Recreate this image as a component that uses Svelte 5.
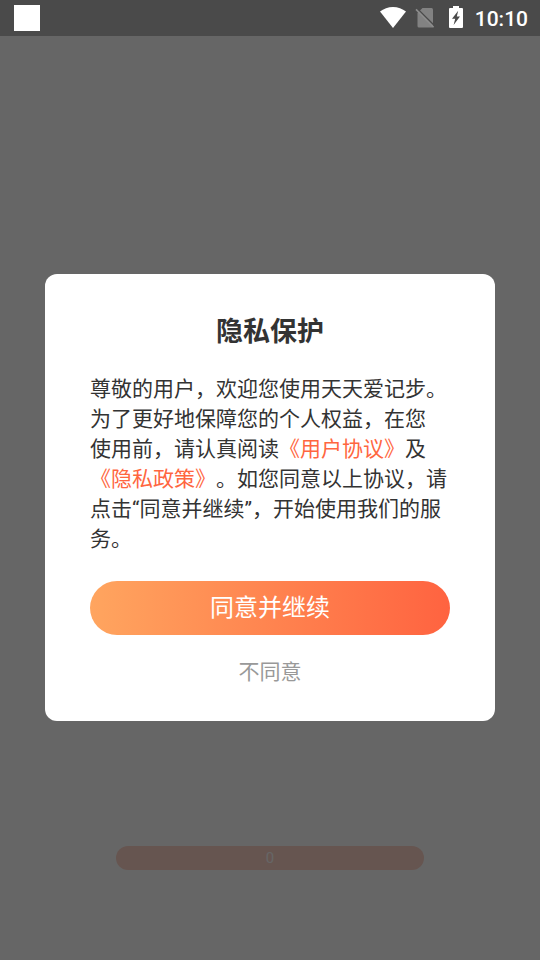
<svelte:head>
	<title>天天爱记步</title>
</svelte:head>
<script>
	let open = true,
	progress = 0,
	time = '10:10';

	function close() {
		open = false;
	}
</script>

<div class="screen">
	<header>
		<span class="app"></span>
		<svg class="wifi" viewBox="0 0 26 21" aria-hidden="true">
			<path d="M0 4.6C3.6 1.7 8.1 0 13 0s9.400 1.700 13 4.600L13 21z" fill="#fff" />
		</svg>
		<svg class="sim" viewBox="0 0 20 21" aria-hidden="true">
			<path d="M7.500 1h9q1.500 0 1.500 1.500v17q0 1-1 1H4q-1.500 0-1.500-1.500V6z" fill="#828282" />
			<path d="M2.200 1.400L19.600 18.800" stroke="#4a4a4a" stroke-width="1.400" />
			<path d="M1 2.400L18.600 20.200" stroke="#8c8c8c" stroke-width="1.600" />
		</svg>
		<svg class="battery" viewBox="0 0 14 22" aria-hidden="true">
			<path d="M4 0h6v2h3q1 0 1 1v18q0 1-1 1H1q-1 0-1-1V3q0-1 1-1h3z" fill="#fff" />
			<path d="M9.200 4.800L3 12.800h3.200L4.600 19l6.400-8.500H7.800z" fill="#4a4a4a" />
		</svg>
		<time>{time}</time>
	</header>

	<main>
		<div class="progress" role="progressbar" aria-label="加载进度" aria-valuenow={progress}>{progress}</div>

		{#if open}
		<div class="overlay">
			<div class="dialog" role="dialog" aria-modal="true" aria-labelledby="title">
				<h1 id="title">隐私保护</h1>
				<p>
					尊敬的用户，欢迎您使用天天爱记步。为了更好地保障您的个人权益，在您<br>使用前，请认真阅读<a href="#agreement">《用户协议》</a>及<a href="#privacy">《隐私政策》</a>。如您同意以上协议，请点击“同意并继续”，开始使用我们的服务。
				</p>
				<button class="agree" on:click={close}>同意并继续</button>
				<button class="refuse" on:click={close}>不同意</button>
			</div>
		</div>
		{/if}
	</main>
</div>

<style>
	:global(body) {
		margin: 0;
	}
	.screen {
		display: flex;
		flex-direction: column;
		min-height: 100vh;
		background-color: #fff;
		font-family: Roboto, "Noto Sans CJK SC", sans-serif;
	}
	header {
		display: flex;
		align-items: center;
		height: 36px;
		padding: 0 12px 0 14px;
		box-sizing: border-box;
		background-color: #4a4a4a;
		color: #fff;
	}
	header svg {
		margin-bottom: 2px;
	}
	.app {
		width: 26px;
		height: 26px;
		margin-right: auto;
		background-color: #fff;
	}
	.wifi {
		width: 26px;
		height: 21px;
		margin-right: 9px;
	}
	.sim {
		width: 20px;
		height: 21px;
		margin-right: 14px;
	}
	.battery {
		width: 14px;
		height: 22px;
		margin-right: 12px;
	}
	time {
		padding-top: 2px;
		font-size: 21px;
		font-weight: 500;
		line-height: 34px;
	}
	main {
		position: relative;
		display: flex;
		flex: 1;
		flex-direction: column;
		justify-content: flex-end;
		align-items: center;
		padding-bottom: 90px;
	}
	.progress {
		width: 57%;
		border-radius: 12px;
		background-color: #ffd4c8;
		color: #fff;
		font-size: 15px;
		line-height: 24px;
		text-align: center;
	}
	.overlay {
		position: absolute;
		inset: 0;
		display: flex;
		align-items: center;
		justify-content: center;
		padding-bottom: 1px;
		background-color: rgba(0, 0, 0, .6);
	}
	.dialog {
		display: flex;
		flex-direction: column;
		align-items: center;
		width: 100%;
		margin: 0 45px;
		padding: 43px 45px 34px;
		box-sizing: border-box;
		border-radius: 12px;
		background-color: #fff;
	}
	h1 {
		margin: 0 0 27px;
		color: #333;
		font-size: 27px;
		font-weight: 700;
		line-height: 30px;
	}
	p {
		margin: 0 0 27px;
		color: #333;
		font-size: 21px;
		line-height: 30px;
		text-spacing-trim: space-all;
	}
	a {
		color: #ff6640;
		text-decoration: none;
	}
	button {
		padding: 0;
		border: 0;
		background: none;
		font-family: inherit;
		cursor: pointer;
	}
	.agree {
		width: 100%;
		margin-bottom: 22px;
		border-radius: 27px;
		background-image: linear-gradient(to right, #ffa55f, #ff6340);
		color: #fff;
		font-size: 24px;
		line-height: 54px;
	}
	.refuse {
		color: #999;
		font-size: 21px;
		line-height: 30px;
	}
</style>
